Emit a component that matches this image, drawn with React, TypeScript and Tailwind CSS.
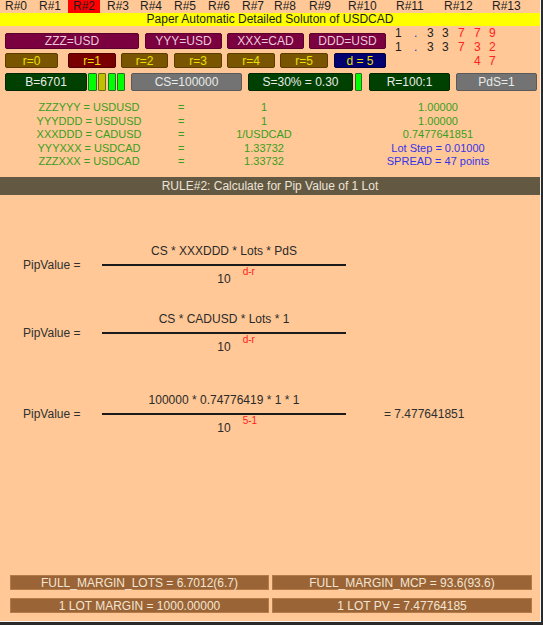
import React from 'react';

const tabs: [string, number][] = [
  ['R#0', 34], ['R#1', 29], ['R#2', 39], ['R#3', 33], ['R#4', 34], ['R#5', 34], ['R#6', 34],
  ['R#7', 32], ['R#8', 35], ['R#9', 39], ['R#10', 48], ['R#11', 48], ['R#12', 48], ['R#13', 40],
];

const Box: React.FC<{ className: string; children: React.ReactNode }> = ({ className, children }) => (
  <div className={`flex items-center justify-center rounded-[2px] border ${className}`}>{children}</div>
);

const digitCols = [19, 13, 15, 16, 16, 15, 10];
const digitRows: { t: string; c: string }[][] = [
  [
    { t: '1', c: 'text-[#202020]' }, { t: '.', c: 'text-[#3030d0]' }, { t: '3', c: 'text-[#202020]' },
    { t: '3', c: 'text-[#202020]' }, { t: '7', c: 'text-[#ff2020]' }, { t: '7', c: 'text-[#ff2020]' },
    { t: '9', c: 'text-[#ff2020]' },
  ],
  [
    { t: '1', c: 'text-[#202020]' }, { t: '.', c: 'text-[#3030d0]' }, { t: '3', c: 'text-[#202020]' },
    { t: '3', c: 'text-[#202020]' }, { t: '7', c: 'text-[#ff2020]' }, { t: '3', c: 'text-[#ff2020]' },
    { t: '2', c: 'text-[#ff2020]' },
  ],
  [
    { t: '', c: '' }, { t: '', c: '' }, { t: '', c: '' }, { t: '', c: '' }, { t: '', c: '' },
    { t: '4', c: 'text-[#ff2020]' }, { t: '7', c: 'text-[#ff2020]' },
  ],
];

const eqRows = [
  ['ZZZYYY = USDUSD', '1', '1.00000', 'g'],
  ['YYYDDD = USDUSD', '1', '1.00000', 'g'],
  ['XXXDDD = CADUSD', '1/USDCAD', '0.7477641851', 'g'],
  ['YYYXXX = USDCAD', '1.33732', 'Lot Step = 0.01000', 'b'],
  ['ZZZXXX = USDCAD', '1.33732', 'SPREAD = 47 points', 'b'],
];

const Formula: React.FC<{ num: string; sup: string; result?: string; className: string }> = ({ num, sup, result, className }) => (
  <div className={`flex items-center ${className}`}>
    <div className="ml-[23px] w-[79px] text-[12px] text-[#303030]">PipValue =</div>
    <div className="flex w-[244px] flex-col">
      <div className="mb-[5px] h-[16px] text-center text-[12px] leading-[16px] text-[#2a2a2a]">{num}</div>
      <div className="h-[2px] bg-[#1a1a1a]" />
      <div className="mt-[5px] flex h-[16px] justify-center text-[12px] leading-[16px] text-[#2a2a2a]">
        <span className="relative">
          10
          <span className="absolute left-[calc(100%+12px)] top-[-4px] whitespace-nowrap text-[10px] leading-[10px] text-[#ff2020]">{sup}</span>
        </span>
      </div>
    </div>
    {result && <div className="ml-[38px] text-[12px] text-[#303030]">{result}</div>}
  </div>
);

export default function App() {
  return (
    <div className="flex h-[625px] w-[543px] bg-[#2a2a2a] font-['Liberation_Sans',Arial,sans-serif]">
      <div className="h-[622px] w-[541px] border-b border-r border-[#f4f4f4] bg-[#ffc896]">
        {/* tabs */}
        <div className="flex h-[13px] pl-[5px] text-[12px] leading-[13px] text-[#1e1e1e]">
          {tabs.map(([t, w]) =>
            t === 'R#2' ? (
              <div key={t} style={{ width: w }}>
                <div className="h-[13px] w-[32px] bg-[#ff0000] pl-[5px]">{t}</div>
              </div>
            ) : (
              <div key={t} style={{ width: w }}>{t}</div>
            )
          )}
        </div>
        <div className="h-[13px] bg-[#ffff00] text-center text-[12px] leading-[13px] text-[#1e1e1e]">
          Paper Automatic Detailed Soluton of USDCAD
        </div>

        {/* currency / r rows + digits */}
        <div className="flex">
          <div className="w-[390px] pl-[5px] pt-[7px] text-[12px]">
            <div className="flex h-[16px] gap-[5px] text-[#ecc8dc]">
              <Box className="w-[134px] border-[#5a0030] bg-[#7a0040]">ZZZ=USD</Box>
              <Box className="ml-[1px] w-[77px] border-[#5a0030] bg-[#7a0040]">YYY=USD</Box>
              <Box className="w-[77px] border-[#5a0030] bg-[#7a0040]">XXX=CAD</Box>
              <Box className="w-[77px] border-[#5a0030] bg-[#7a0040]">DDD=USD</Box>
            </div>
            <div className="mt-[4px] flex h-[15px] text-[#e8e000]">
              <Box className="w-[53px] border-[#5a3c00] bg-[#7a5500]">r=0</Box>
              <Box className="ml-[10px] w-[48px] border-[#500000] bg-[#780000]">r=1</Box>
              <Box className="ml-[5px] w-[47px] border-[#5a3c00] bg-[#7a5500]">r=2</Box>
              <Box className="ml-[6px] w-[48px] border-[#5a3c00] bg-[#7a5500]">r=3</Box>
              <Box className="ml-[5px] w-[48px] border-[#5a3c00] bg-[#7a5500]">r=4</Box>
              <Box className="ml-[5px] w-[48px] border-[#5a3c00] bg-[#7a5500]">r=5</Box>
              <Box className="ml-[6px] w-[52px] border-[#000040] bg-[#000070]">d = 5</Box>
            </div>
          </div>
          <div className="pl-[5px] text-[12px]">
            {digitRows.map((row, i) => (
              <div key={i} className="flex h-[14px] leading-[14px]">
                {row.map((d, j) => (
                  <span key={j} className={d.c} style={{ width: digitCols[j] }}>{d.t}</span>
                ))}
              </div>
            ))}
          </div>
        </div>

        {/* settings row */}
        <div className="mt-[5px] flex h-[18px] pl-[5px] text-[12px] text-[#e8ece8]">
          <Box className="w-[82px] border-[#002800] bg-[#004000]">B=6701</Box>
          <div className="ml-[1px] flex gap-[1px]">
            <div className="w-[9px] rounded-[1px] border border-[#2a6a2a] bg-[#00ff00]" />
            <div className="w-[8px] rounded-[1px] border border-[#6a6a10] bg-[#c0c000]" />
            <div className="ml-[1px] w-[8px] rounded-[1px] border border-[#2a6a2a] bg-[#00ff00]" />
            <div className="w-[8px] rounded-[1px] border border-[#2a6a2a] bg-[#00ff00]" />
          </div>
          <Box className="ml-[6px] w-[111px] border-[#5a5a5a] bg-[#737373]">CS=100000</Box>
          <Box className="ml-[6px] w-[105px] border-[#002800] bg-[#004000]">S=30% = 0.30</Box>
          <div className="ml-[2px] w-[7px] rounded-[1px] border border-[#2a6a2a] bg-[#00ff00]" />
          <Box className="ml-[7px] w-[81px] border-[#002800] bg-[#004000]">R=100:1</Box>
          <Box className="ml-[6px] w-[81px] border-[#5a5a5a] bg-[#737373]">PdS=1</Box>
        </div>

        {/* equations */}
        <div className="mt-[10px] text-[11px] leading-[13.5px]">
          {eqRows.map(([a, b, c, k]) => (
            <div key={a} className="flex text-[#3a9e1e]">
              <div className="w-[178px] text-center">{a}</div>
              <div className="w-[6px] text-center">=</div>
              <div className="w-[160px] text-center">{b}</div>
              <div className={`w-[188px] text-center ${k === 'b' ? 'text-[#3434e8]' : ''}`}>{c}</div>
            </div>
          ))}
        </div>

        {/* rule header */}
        <div className="mt-[8.5px] h-[18px] bg-[#635943] text-center text-[12px] leading-[18px] text-[#ece4d8]">
          RULE#2: Calculate for Pip Value of 1 Lot
        </div>

        <Formula className="mt-[48px]" num="CS * XXXDDD * Lots * PdS" sup="d-r" />
        <Formula className="mt-[24px]" num="CS * CADUSD * Lots * 1" sup="d-r" />
        <Formula className="mt-[37px]" num="100000 * 0.74776419 * 1 * 1" sup="5-1" result="= 7.477641851" />

        {/* margins */}
        <div className="mt-[139px] flex flex-col gap-[8px] pl-[10px] text-[12px] text-[#f4e4d2]">
          <div className="flex h-[15px] gap-[3px]">
            <div className="flex w-[259px] items-center justify-center border border-[#b47a48] bg-[#9a6436]">FULL_MARGIN_LOTS = 6.7012(6.7)</div>
            <div className="flex w-[260px] items-center justify-center border border-[#b47a48] bg-[#9a6436]">FULL_MARGIN_MCP = 93.6(93.6)</div>
          </div>
          <div className="flex h-[15px] gap-[3px]">
            <div className="flex w-[259px] items-center justify-center border border-[#b47a48] bg-[#9a6436]">1 LOT MARGIN = 1000.00000</div>
            <div className="flex w-[260px] items-center justify-center border border-[#b47a48] bg-[#9a6436]">1 LOT PV = 7.47764185</div>
          </div>
        </div>
      </div>
    </div>
  );
}
